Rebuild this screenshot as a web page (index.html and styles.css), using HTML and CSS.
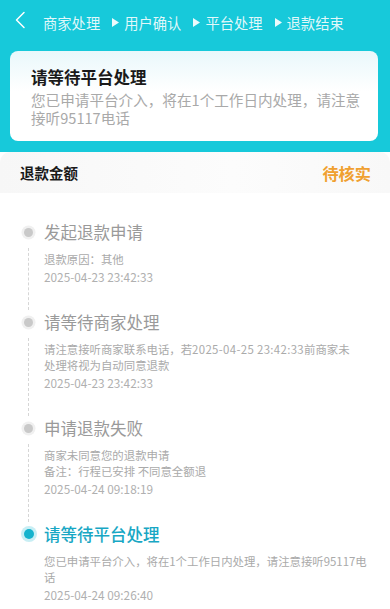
FILE: index.html
```html
<!DOCTYPE html>
<html lang="zh-CN">
<head>
<meta charset="utf-8">
<meta name="viewport" content="width=390">
<link rel="stylesheet" href="styles.css">
<title>退款详情</title>
</head>
<body>
<div class="top">
  <div class="nav">
    <svg class="back" width="12" height="18" viewBox="0 0 12 18"><polyline points="10,1.5 2.5,9 10,16.5" fill="none" stroke="#fff" stroke-width="1.5" stroke-linecap="round" stroke-linejoin="round"/></svg>
    <div class="steps">
      <span class="step">商家处理</span>
      <svg class="tri" width="7" height="9" viewBox="0 0 7 9"><polygon points="0,0 7,4.5 0,9" fill="#fff"/></svg>
      <span class="step">用户确认</span>
      <svg class="tri" width="7" height="9" viewBox="0 0 7 9"><polygon points="0,0 7,4.5 0,9" fill="#fff"/></svg>
      <span class="step">平台处理</span>
      <svg class="tri" width="7" height="9" viewBox="0 0 7 9"><polygon points="0,0 7,4.5 0,9" fill="#fff"/></svg>
      <span class="step">退款结束</span>
    </div>
  </div>
  <div class="card">
    <div class="card-title">请等待平台处理</div>
    <div class="card-desc">您已申请平台介入，将在1个工作日内处理，请注意接听95117电话</div>
  </div>
</div>
<div class="panel">
  <div class="summary">
    <span class="sum-label">退款金额</span>
    <span class="sum-status">待核实</span>
  </div>
  <div class="timeline">
    <div class="item">
      <div class="rail"><div class="dot-box"><span class="dot"></span></div><div class="line"></div></div>
      <div class="content">
        <div class="t-title">发起退款申请</div>
        <div class="t-desc">退款原因：其他</div>
        <div class="t-date">2025-04-23 23:42:33</div>
      </div>
    </div>
    <div class="item">
      <div class="rail"><div class="dot-box"><span class="dot"></span></div><div class="line"></div></div>
      <div class="content">
        <div class="t-title">请等待商家处理</div>
        <div class="t-desc">请注意接听商家联系电话，若<time class="inline-time">2025-04-25 23:42:33</time>前商家未<span class="word">处理</span>将视为自动同意退款</div>
        <div class="t-date">2025-04-23 23:42:33</div>
      </div>
    </div>
    <div class="item">
      <div class="rail"><div class="dot-box"><span class="dot"></span></div><div class="line"></div></div>
      <div class="content">
        <div class="t-title">申请退款失败</div>
        <div class="t-desc">商家未同意您的退款申请<br>备注：行程已安排 不同意全额退</div>
        <div class="t-date">2025-04-24 09:18:19</div>
      </div>
    </div>
    <div class="item item-active">
      <div class="rail"><div class="dot-box"><span class="dot"></span></div></div>
      <div class="content">
        <div class="t-title">请等待平台处理</div>
        <div class="t-desc">您已申请平台介入，将在1个工作日内处理，请注意接听95117电话</div>
        <div class="t-date">2025-04-24 09:26:40</div>
      </div>
    </div>
  </div>
</div>
</body>
</html>
```
FILE: styles.css
```css
html, body {
  margin: 0;
  padding: 0;
  overflow: hidden;
}
body {
  font-family: "Noto Sans CJK SC", "Noto Sans", sans-serif;
  background: #ffffff;
  width: 390px;
  height: 609px;
}
.top {
  background: #17c9da;
  padding: 0 12px 11px 10px;
}
.nav {
  height: 45px;
  display: flex;
  align-items: center;
}
.back {
  margin-left: 4px;
  margin-top: -6px;
  display: block;
}
.steps {
  display: flex;
  align-items: center;
  margin-left: 17px;
  color: rgba(255, 255, 255, 0.88);
  font-size: 14.3px;
  line-height: 20px;
}
.tri {
  display: block;
  margin: 0 5px 0 12px;
  opacity: 0.92;
}
.card {
  margin-top: 6px;
  border-radius: 8px;
  background: linear-gradient(180deg, #e9f8fb 0%, #ffffff 45%);
  padding: 15px 10px 14px 21px;
}
.card-title {
  font-size: 16.5px;
  font-weight: 700;
  line-height: 22px;
  color: #1a1a1a;
}
.card-desc {
  margin-top: 3px;
  font-size: 14.6px;
  line-height: 18px;
  color: #a9a9a9;
}
.panel {
  background: #ffffff;
  border-radius: 10px 10px 0 0;
}
.summary {
  height: 41px;
  display: flex;
  align-items: center;
  justify-content: space-between;
  padding: 0 19px 0 20px;
  background: linear-gradient(90deg, #f7f7f7 0%, #fcfcfc 60%, #f8f8f8 100%);
  border-radius: 10px 10px 0 0;
}
.sum-label {
  font-size: 14.5px;
  font-weight: 700;
  color: #1a1a1a;
}
.sum-status {
  font-size: 16.2px;
  font-weight: 700;
  color: #f0a030;
}
.timeline {
  padding-top: 27px;
}
.item {
  display: flex;
}
.rail {
  width: 17px;
  margin-left: 20px;
  margin-right: 7px;
  display: flex;
  flex-direction: column;
  align-items: center;
  flex-shrink: 0;
}
.dot-box {
  height: 24px;
  display: flex;
  align-items: center;
  justify-content: center;
}
.dot {
  width: 9px;
  height: 9px;
  border-radius: 50%;
  background: #c9c9c9;
  box-shadow: 0 0 0 2.5px #f0f0f0;
}
.line {
  flex: 1;
  margin-top: 4px;
  border-left: 1px dashed #d6d6d6;
}
.content {
  flex: 1;
  padding-bottom: 25px;
  padding-right: 22px;
}
.t-title {
  font-size: 16.5px;
  line-height: 24px;
  color: #9a9a9a;
}
.t-desc {
  margin-top: 7px;
  font-size: 11.4px;
  line-height: 16px;
  color: #aaaaaa;
}
.inline-time {
  letter-spacing: 0.35px;
}
.word {
  white-space: nowrap;
}
.t-date {
  margin-top: 2px;
  font-size: 11.8px;
  line-height: 16px;
  color: #b0b0b0;
}
.item-active .t-title {
  color: #18a7c4;
  font-weight: 500;
}
.item-active .dot {
  width: 10px;
  height: 10px;
  background: #15b3cd;
  box-shadow: 0 0 0 3px #c8eef4;
}
```
